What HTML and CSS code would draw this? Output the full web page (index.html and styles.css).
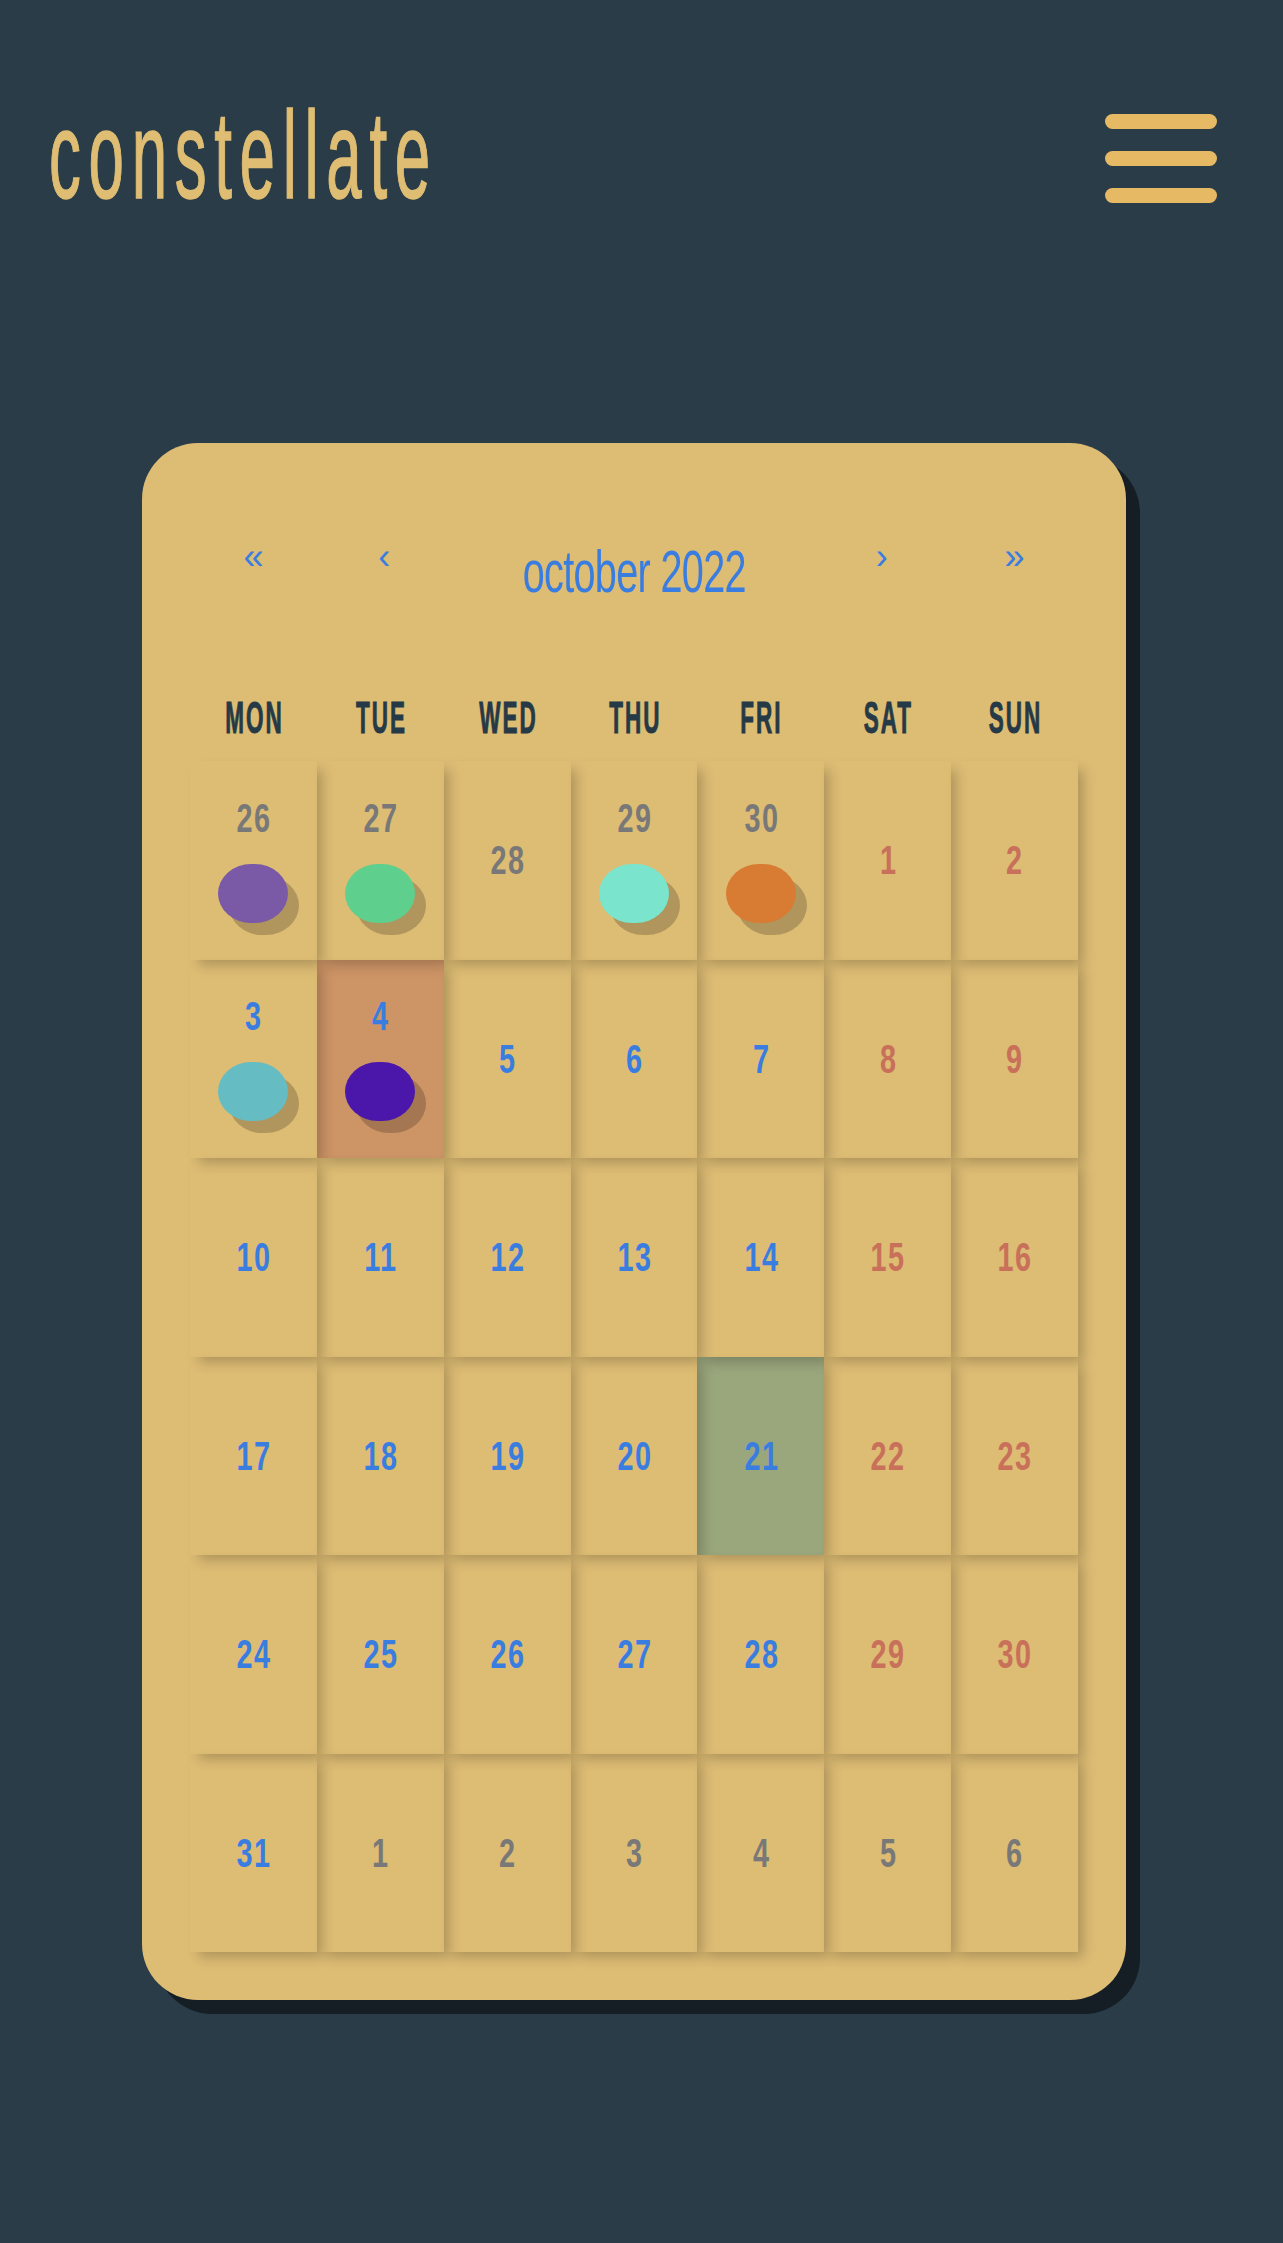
FILE: index.html
```html
<!DOCTYPE html>
<html lang="en">
<head>
<meta charset="utf-8">
<title>constellate</title>
<link rel="stylesheet" href="styles.css">
</head>
<body>
<div class="page">
  <header class="topbar">
    <h1 class="logo">constellate</h1>
    <button class="menu" aria-label="menu"><span></span><span></span><span></span></button>
  </header>
  <main class="card">
    <div class="nav">
      <span class="arrow">«</span>
      <span class="arrow prev">‹</span>
      <span class="month">october 2022</span>
      <span class="arrow next">›</span>
      <span class="arrow">»</span>
    </div>
    <div class="weekdays">
      <span>MON</span><span>TUE</span><span>WED</span><span>THU</span><span>FRI</span><span>SAT</span><span>SUN</span>
    </div>
    <div class="grid">
      <div class="cell oth"><span class="num">26</span><span class="dot purple"></span></div>
      <div class="cell oth"><span class="num">27</span><span class="dot green"></span></div>
      <div class="cell oth"><span class="num">28</span></div>
      <div class="cell oth"><span class="num">29</span><span class="dot mint"></span></div>
      <div class="cell oth"><span class="num">30</span><span class="dot orange"></span></div>
      <div class="cell wkd"><span class="num">1</span></div>
      <div class="cell wkd"><span class="num">2</span></div>

      <div class="cell cur"><span class="num">3</span><span class="dot teal"></span></div>
      <div class="cell cur today"><span class="num">4</span><span class="dot indigo"></span></div>
      <div class="cell cur"><span class="num">5</span></div>
      <div class="cell cur"><span class="num">6</span></div>
      <div class="cell cur"><span class="num">7</span></div>
      <div class="cell wkd"><span class="num">8</span></div>
      <div class="cell wkd"><span class="num">9</span></div>

      <div class="cell cur"><span class="num">10</span></div>
      <div class="cell cur"><span class="num">11</span></div>
      <div class="cell cur"><span class="num">12</span></div>
      <div class="cell cur"><span class="num">13</span></div>
      <div class="cell cur"><span class="num">14</span></div>
      <div class="cell wkd"><span class="num">15</span></div>
      <div class="cell wkd"><span class="num">16</span></div>

      <div class="cell cur"><span class="num">17</span></div>
      <div class="cell cur"><span class="num">18</span></div>
      <div class="cell cur"><span class="num">19</span></div>
      <div class="cell cur"><span class="num">20</span></div>
      <div class="cell cur sel"><span class="num">21</span></div>
      <div class="cell wkd"><span class="num">22</span></div>
      <div class="cell wkd"><span class="num">23</span></div>

      <div class="cell cur"><span class="num">24</span></div>
      <div class="cell cur"><span class="num">25</span></div>
      <div class="cell cur"><span class="num">26</span></div>
      <div class="cell cur"><span class="num">27</span></div>
      <div class="cell cur"><span class="num">28</span></div>
      <div class="cell wkd"><span class="num">29</span></div>
      <div class="cell wkd"><span class="num">30</span></div>

      <div class="cell cur"><span class="num">31</span></div>
      <div class="cell oth"><span class="num">1</span></div>
      <div class="cell oth"><span class="num">2</span></div>
      <div class="cell oth"><span class="num">3</span></div>
      <div class="cell oth"><span class="num">4</span></div>
      <div class="cell oth"><span class="num">5</span></div>
      <div class="cell oth"><span class="num">6</span></div>
    </div>
  </main>
</div>
</body>
</html>
```

FILE: styles.css
```css
html, body {
  margin: 0;
  background: #293c48;
}

body {
  font-family: "Liberation Sans", Arial, sans-serif;
  min-height: 2243px;
}

.page {
  width: 1268px;
}

.topbar {
  display: flex;
  justify-content: space-between;
  align-items: flex-start;
  padding: 92px 51px 0 49px;
}

.logo {
  margin: 0;
  font-size: 125px;
  line-height: 1;
  font-weight: 400;
  color: #dfbe74;
  -webkit-text-stroke: 1.5px #dfbe74;
  letter-spacing: 15px;
  white-space: nowrap;
  transform: scaleX(0.51);
  transform-origin: left center;
}

.menu {
  display: flex;
  flex-direction: column;
  gap: 22px;
  width: 112px;
  margin-top: 22px;
  padding: 0;
  border: 0;
  background: none;
}

.menu span {
  display: block;
  height: 15px;
  border-radius: 8px;
  background: #e6b964;
}

.card {
  box-sizing: border-box;
  width: 984px;
  margin: 226px auto 0;
  padding: 96px 48px 48px;
  background: #ddbc74;
  border-radius: 56px;
  box-shadow: 14px 14px 0 #151e25;
}

.nav {
  display: grid;
  grid-template-columns: repeat(7, 1fr);
  align-items: start;
  color: #3a7de0;
}

.arrow {
  font-size: 36px;
  line-height: 1;
  text-align: center;
}

.prev { padding-left: 8px; }
.next { padding-right: 12px; }

.month {
  grid-column: span 3;
  font-size: 60px;
  line-height: 1;
  letter-spacing: -1px;
  text-align: center;
  padding-top: 3px;
  white-space: nowrap;
  transform: scaleX(0.66);
}

.weekdays {
  display: grid;
  grid-template-columns: repeat(7, 1fr);
  margin-top: 93px;
  color: #263946;
}

.weekdays span {
  font-size: 45px;
  font-weight: 700;
  line-height: 1;
  letter-spacing: 4px;
  padding-left: 4px;
  text-align: center;
  -webkit-text-stroke: 1px #263946;
  transform: scaleX(0.5);
}

.grid {
  display: grid;
  grid-template-columns: repeat(7, 1fr);
  grid-auto-rows: 198.5px;
  margin-top: 21px;
}

.cell {
  position: relative;
  display: flex;
  flex-direction: column;
  align-items: center;
  justify-content: center;
  gap: 26px;
  background: #ddbc74;
}

.cell::after {
  content: "";
  position: absolute;
  inset: 0;
  z-index: 1;
  pointer-events: none;
  box-shadow: 7px 7px 12px -2px rgba(0, 0, 0, 0.22);
}

.today { background: #cd9466; }
.sel { background: #9aa67c; }

.num {
  font-size: 40px;
  font-weight: 700;
  line-height: 1;
  letter-spacing: 2px;
  padding-left: 2px;
  transform: scaleX(0.72);
}

.cur .num { color: #3a7de0; }
.wkd .num { color: #c8705a; }
.oth .num { color: #787878; }

.dot {
  width: 70px;
  height: 59px;
  border-radius: 33px / 29.5px;
  box-shadow: 11px 12px 0 rgba(0, 0, 0, 0.2);
}

.purple { background: #7a5aa6; }
.green { background: #5fcf8e; }
.mint { background: #7ae5cc; }
.orange { background: #d87b33; }
.teal { background: #66bcc3; }
.indigo { background: #4b16aa; }
```
